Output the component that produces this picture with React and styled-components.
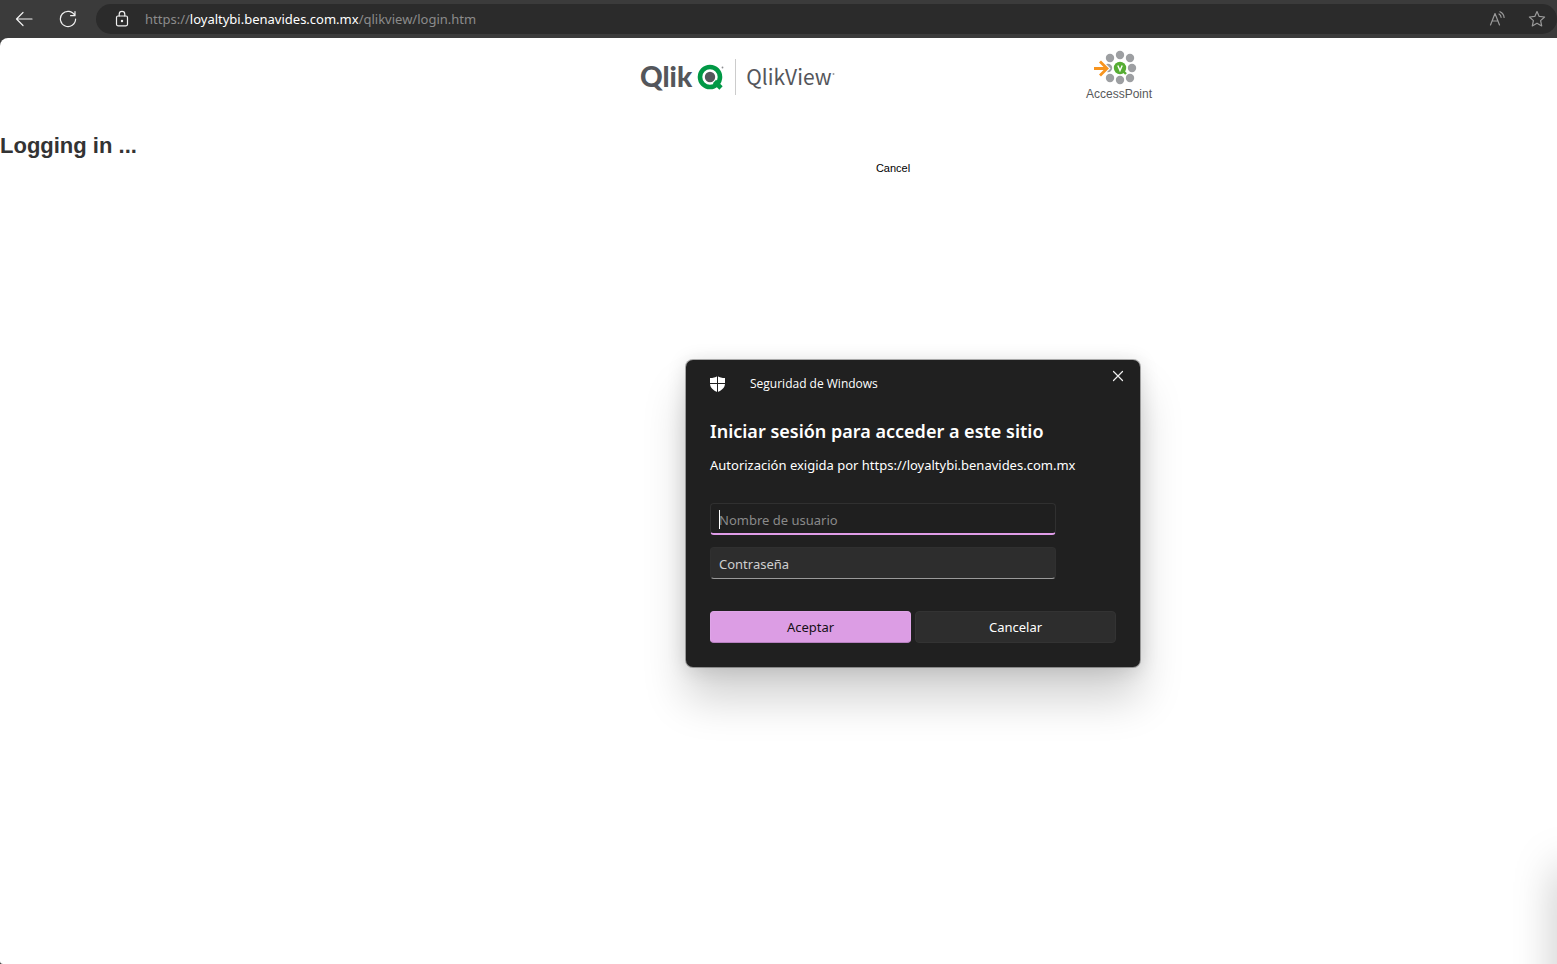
import React from "react";
import styled, { createGlobalStyle } from "styled-components";

const GlobalStyle = createGlobalStyle`
  *, *::before, *::after { box-sizing: border-box; }
  body { margin: 0; background: #3b3b3b; }
  h1, h2, p { margin: 0; }
  button, input { font-family: inherit; }
`;

const Browser = styled.div`
  position: relative;
  display: flex;
  flex-direction: column;
  min-height: 100vh;
  overflow: hidden;
  font-family: "Noto Sans", "Open Sans", sans-serif;
`;

const Toolbar = styled.header`
  display: flex;
  align-items: center;
  height: 38px;
  padding-left: 12px;
  background: #3b3b3b;
`;

const ToolButton = styled.button`
  display: flex;
  align-items: center;
  justify-content: center;
  width: 24px;
  height: 24px;
  padding: 0;
  border: 0;
  background: none;
  color: ${(p) => (p.$dim ? "#9a9a9a" : "#f0f0f0")};
`;

const NavButtons = styled.nav`
  display: flex;
  gap: 20px;
  margin-right: 16px;
`;

const AddressBar = styled.div`
  display: flex;
  flex: 1;
  align-items: center;
  height: 30px;
  padding: 0 8px 0 14px;
  border-radius: 15px;
  background: #2b2b2b;
`;

const Address = styled.div`
  flex: 1;
  margin-left: 11px;
  color: #8c8c8c;
  font-size: 13px;
  line-height: 20px;
`;

const Host = styled.span`
  color: #ffffff;
`;

const AddressActions = styled.div`
  display: flex;
  gap: 16px;
`;

const Page = styled.main`
  display: flex;
  flex: 1;
  flex-direction: column;
  border-radius: 8px 0 0 3px;
  background: #ffffff;
  font-family: "Liberation Sans", Arial, sans-serif;
`;

const Banner = styled.div`
  display: flex;
  justify-content: center;
  padding: 12px 0 0 235px;
`;

const BannerInner = styled.div`
  display: flex;
  align-items: flex-start;
  justify-content: space-between;
  width: 512px;
  height: 80px;
`;

const Brand = styled.div`
  display: flex;
  align-items: flex-start;
  height: 36px;
  margin-top: 9px;
  color: #54565b;
`;

const QlikWord = styled.span`
  margin-right: 4px;
  font-family: Lato, sans-serif;
  font-size: 28px;
  font-weight: 900;
  line-height: 34px;
`;

const Product = styled.span`
  display: flex;
  align-items: flex-start;
  height: 36px;
  margin-left: 11px;
  padding-left: 10px;
  border-left: 1px solid #cccccc;
  font-family: "Noto Sans CJK SC", sans-serif;
  font-size: 21px;
  line-height: 34px;
`;

const AccessPoint = styled.div`
  display: flex;
  flex-direction: column;
  align-items: center;
  color: #58595b;
  font-size: 12px;
  line-height: 16px;
`;

const Status = styled.h1`
  color: #333333;
  font-size: 22px;
  line-height: 32px;
`;

const CancelRow = styled.div`
  display: flex;
  justify-content: center;
  padding-left: 229px;
`;

const CancelLink = styled.a`
  color: #000000;
  font-size: 11px;
  line-height: 12px;
  text-decoration: none;
`;

const Overlay = styled.div`
  position: absolute;
  inset: 0;
  display: flex;
  align-items: flex-start;
  justify-content: center;
  padding: 360px 0 0 269px;
`;

const Dialog = styled.form`
  width: 454px;
  padding: 8px 24px 24px;
  border-radius: 7px;
  background: #202020;
  box-shadow: 0 0 0 1px rgba(0, 0, 0, 0.3), 0 32px 44px rgba(0, 0, 0, 0.18),
    0 2px 20px rgba(0, 0, 0, 0.14);
  color: #ffffff;
`;

const DialogBar = styled.div`
  display: flex;
  align-items: flex-start;
  justify-content: space-between;
  height: 50px;
  margin-right: -14px;
`;

const DialogSource = styled.div`
  display: flex;
  align-items: center;
  gap: 24px;
  height: 32px;
  font-family: "Open Sans", sans-serif;
  font-size: 12px;
  line-height: 16px;
`;

const CloseButton = styled(ToolButton)`
  height: 16px;
`;

const DialogTitle = styled.h2`
  font-size: 18px;
  font-weight: 600;
  line-height: 26px;
`;

const DialogText = styled.p`
  margin-top: 11px;
  font-size: 13px;
  line-height: 20px;
`;

const Fields = styled.div`
  display: flex;
  flex-direction: column;
  gap: 12px;
  width: 346px;
  margin-top: 28px;
`;

const FieldLabel = styled.label`
  position: relative;
  display: block;
`;

const Caret = styled.span`
  position: absolute;
  top: 7px;
  left: 9px;
  width: 1px;
  height: 19px;
  background: #ffffff;
`;

const Field = styled.input`
  display: block;
  width: 100%;
  height: 32px;
  padding: 2px 8px 0;
  border: 1px solid #303030;
  border-bottom: ${(p) => (p.$active ? "2px solid #df9ce8" : "1px solid #9a9a9a")};
  border-radius: 4px;
  outline: 0;
  background: ${(p) => (p.$active ? "#1f1f1f" : "#2d2d2d")};
  color: #ffffff;
  font-size: 13px;
  line-height: 20px;

  &::placeholder {
    color: ${(p) => (p.$active ? "#8a8a8a" : "#cfcfcf")};
    opacity: 1;
  }
`;

const Actions = styled.div`
  display: grid;
  grid-template-columns: 1fr 1fr;
  gap: 4px;
  margin-top: 32px;
`;

const ActionButton = styled.button`
  height: 32px;
  padding: 0;
  border: 1px solid ${(p) => (p.$primary ? "#dfa5e8" : "#333333")};
  border-bottom-color: ${(p) => (p.$primary ? "#b780c0" : "#333333")};
  border-radius: 4px;
  background: ${(p) => (p.$primary ? "#dc9de4" : "#2d2d2d")};
  color: ${(p) => (p.$primary ? "#151015" : "#ffffff")};
  font-size: 13px;
  line-height: 20px;
`;

const SideShadow = styled.div`
  position: absolute;
  top: 868px;
  right: -24px;
  bottom: -80px;
  width: 20px;
  box-shadow: 0 0 44px rgba(0, 0, 0, 0.36);
`;

const Line = ({ size = 18, children, ...rest }) => (
  <svg
    width={size}
    height={size}
    viewBox={`0 0 ${size} ${size}`}
    fill="none"
    stroke="currentColor"
    strokeWidth="1.2"
    strokeLinecap="round"
    strokeLinejoin="round"
    aria-hidden="true"
    {...rest}
  >
    {children}
  </svg>
);

const BackIcon = () => (
  <Line>
    <path d="M17 9H1.500M8 2.500L1.500 9L8 15.500" />
  </Line>
);

const ReloadIcon = () => (
  <Line>
    <path d="M15.800 5.500A7.600 7.600 0 1 0 16.600 9M16 1.500V5.700H11.600" />
  </Line>
);

const LockIcon = () => (
  <Line width="24" height="18" viewBox="-3 0 24 18">
    <rect x="3.500" y="6" width="11" height="9.800" rx="1.500" />
    <path d="M6.200 6V4.200a2.800 2.800 0 0 1 5.600 0V6" />
    <circle cx="9" cy="11" r="0.600" fill="currentColor" />
  </Line>
);

const ReadAloudIcon = () => (
  <Line>
    <path d="M2.500 15L7 3.500L11.500 15M4.100 11H9.900" />
    <path d="M11 4c1.300.8 2 2 2.100 3.300M12 1.700c2.400 1.100 3.900 3 4.100 5.800" />
  </Line>
);

const StarIcon = () => (
  <Line>
    <path d="M9 1.500L11.200 6.400L16.600 7L12.600 10.600L13.700 15.900L9 13.200L4.300 15.900L5.400 10.600L1.400 7L6.800 6.400Z" />
  </Line>
);

const CloseIcon = () => (
  <Line size={12}>
    <path d="M1.500 1.500l9 9M10.500 1.500l-9 9" />
  </Line>
);

const ShieldIcon = () => (
  <svg width="16" height="16" viewBox="0 0 16 16" aria-hidden="true">
    <path
      d="M7.500 0C5.500 1.500 3 2 0 2v5.500c0 4.300 3.500 7.200 7.500 8.500 4-1.300 7.500-4.200 7.500-8.500V2C12 2 9.500 1.500 7.500 0z"
      fill="#fff"
    />
    <path d="M7.500 0V16M0 7.500H16" stroke="#202020" strokeWidth="1" />
  </svg>
);

const QlikMark = () => (
  <svg width="28" height="36" viewBox="0 -4 28 36" aria-hidden="true">
    <circle cx="14" cy="14" r="10" fill="#fff" stroke="#009845" strokeWidth="4.600" />
    <path d="M18.500 18.500L25 25" stroke="#009845" strokeWidth="4.600" />
    <circle cx="14" cy="14" r="5.200" fill="#54565b" />
    <circle cx="26.500" cy="4.500" r="0.900" fill="#8d8e91" />
  </svg>
);

const AccessPointMark = () => (
  <svg width="66" height="36" viewBox="0 0 66 36" aria-hidden="true">
    <g fill="#9d9fa2">
      <circle cx="34" cy="5" r="4.200" />
      <circle cx="44" cy="8" r="4.200" />
      <circle cx="46" cy="18" r="4.200" />
      <circle cx="44" cy="28" r="4.200" />
      <circle cx="34" cy="30" r="4.200" />
      <circle cx="24" cy="28" r="4.200" />
      <circle cx="22" cy="18" r="4.200" />
      <circle cx="24" cy="8" r="4.200" />
    </g>
    <g fill="none">
      <path d="M8 18.500H20M14 11.500l7 7-7 7" stroke="#fff" strokeWidth="5" />
      <path d="M8 18.500H20M14 11.500l7 7-7 7" stroke="#f7941e" strokeWidth="2.800" />
    </g>
    <circle cx="34" cy="18" r="6.200" fill="#56ad33" />
    <path d="M36 20l4 4" stroke="#56ad33" strokeWidth="2.400" />
    <path d="M31.800 15.500L34 20.500L36.200 15.500" fill="none" stroke="#fff" strokeWidth="1.400" />
  </svg>
);

const TradeDot = () => (
  <svg width="3" height="36" viewBox="0 0 3 36" aria-hidden="true">
    <circle cx="1.500" cy="15" r="1" fill="#9a9b9e" />
  </svg>
);

export default function App() {
  return (
    <Browser>
      <GlobalStyle />
      <Toolbar>
        <NavButtons>
          <ToolButton type="button" aria-label="Atrás">
            <BackIcon />
          </ToolButton>
          <ToolButton type="button" aria-label="Actualizar">
            <ReloadIcon />
          </ToolButton>
        </NavButtons>
        <AddressBar>
          <ToolButton type="button" aria-label="Información del sitio">
            <LockIcon />
          </ToolButton>
          <Address>
            https://<Host>loyaltybi.benavides.com.mx</Host>/qlikview/login.htm
          </Address>
          <AddressActions>
            <ToolButton type="button" $dim aria-label="Leer en voz alta">
              <ReadAloudIcon />
            </ToolButton>
            <ToolButton type="button" $dim aria-label="Favoritos">
              <StarIcon />
            </ToolButton>
          </AddressActions>
        </AddressBar>
      </Toolbar>

      <Page>
        <Banner>
          <BannerInner>
            <Brand>
              <QlikWord>Qlik</QlikWord>
              <QlikMark />
              <Product>
                QlikView
                <TradeDot />
              </Product>
            </Brand>
            <AccessPoint>
              <AccessPointMark />
              AccessPoint
            </AccessPoint>
          </BannerInner>
        </Banner>
        <Status>Logging in ...</Status>
        <CancelRow>
          <CancelLink href="#cancel">Cancel</CancelLink>
        </CancelRow>
      </Page>

      <SideShadow />

      <Overlay>
        <Dialog role="dialog" aria-labelledby="signin-title">
          <DialogBar>
            <DialogSource>
              <ShieldIcon />
              Seguridad de Windows
            </DialogSource>
            <CloseButton type="button" aria-label="Cerrar">
              <CloseIcon />
            </CloseButton>
          </DialogBar>
          <DialogTitle id="signin-title">Iniciar sesión para acceder a este sitio</DialogTitle>
          <DialogText>Autorización exigida por https://loyaltybi.benavides.com.mx</DialogText>
          <Fields>
            <FieldLabel>
              <Field $active type="text" placeholder="Nombre de usuario" aria-label="Nombre de usuario" />
              <Caret />
            </FieldLabel>
            <FieldLabel>
              <Field type="password" placeholder="Contraseña" aria-label="Contraseña" />
            </FieldLabel>
          </Fields>
          <Actions>
            <ActionButton type="button" $primary>
              Aceptar
            </ActionButton>
            <ActionButton type="button">Cancelar</ActionButton>
          </Actions>
        </Dialog>
      </Overlay>
    </Browser>
  );
}
